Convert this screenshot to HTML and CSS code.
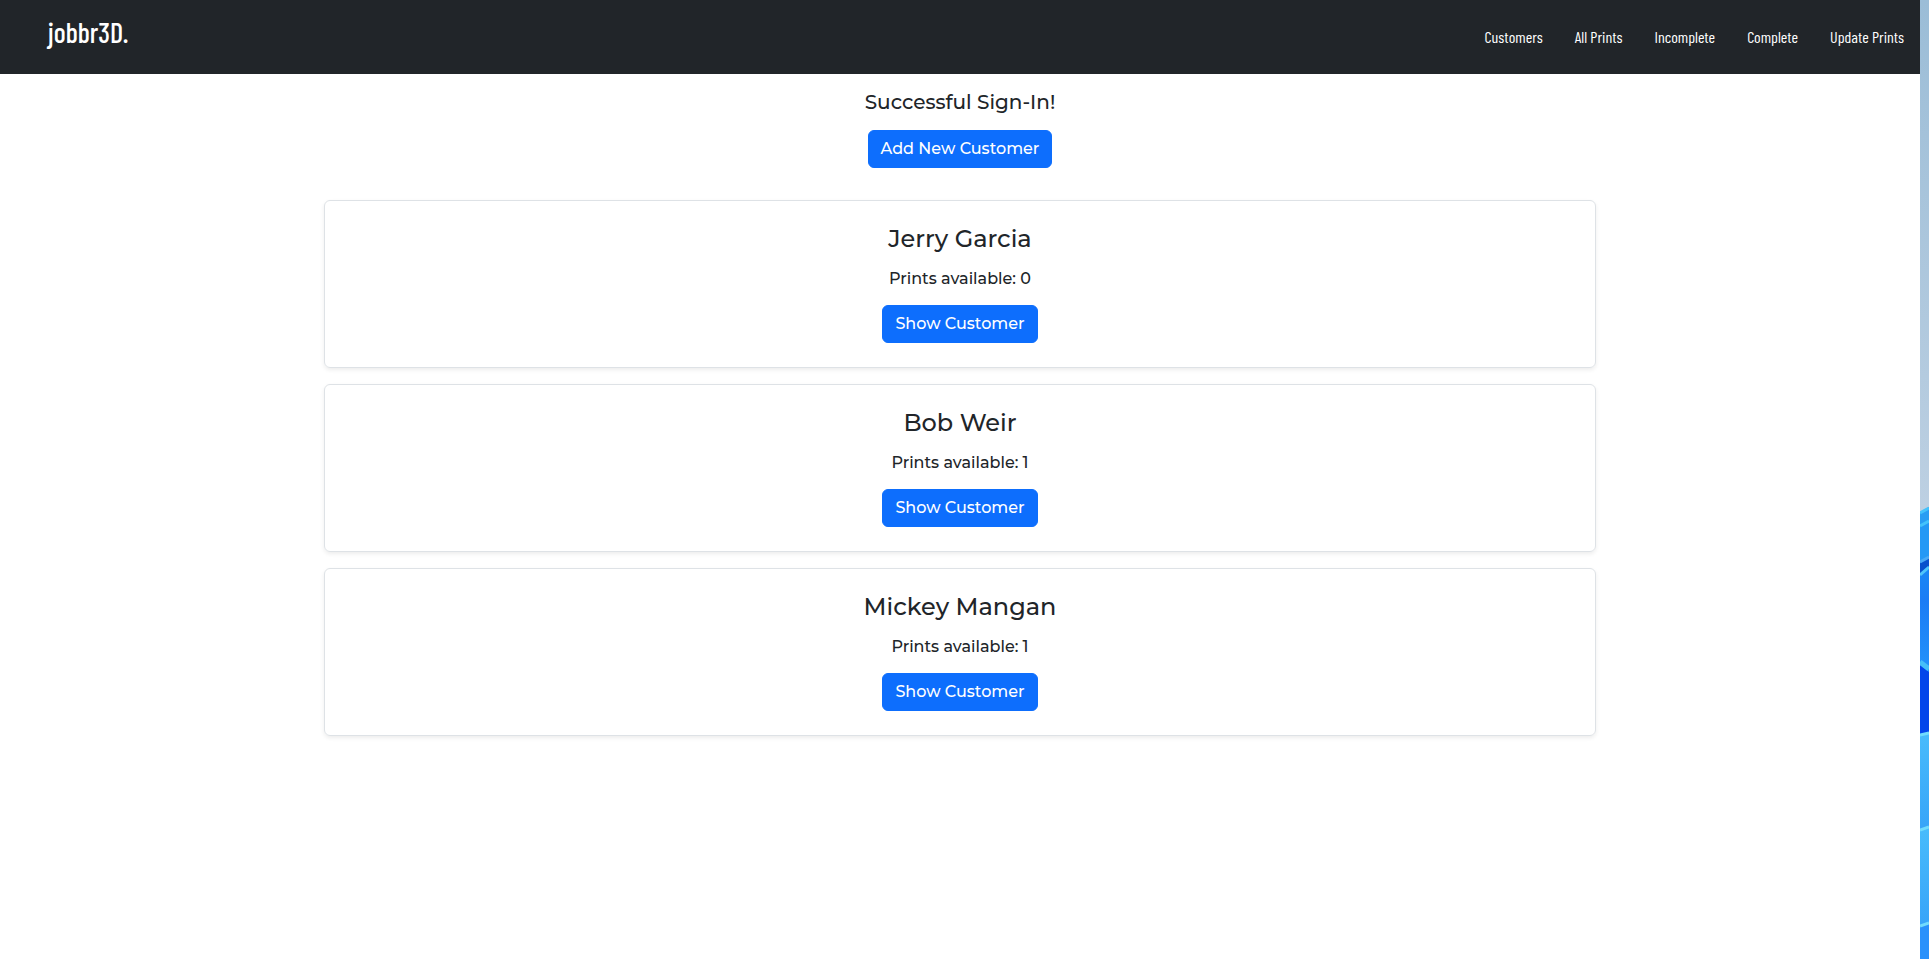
FILE: index.html
```html
<!DOCTYPE html>
<html lang="en">
<head>
<meta charset="utf-8">
<meta name="viewport" content="width=device-width, initial-scale=1">
<title>jobbr3D.</title>
<link rel="stylesheet" href="styles.css">
</head>
<body>
<div class="page">
  <header class="navbar">
    <a class="brand" href="#">jobbr3D.</a>
    <nav class="links">
      <a href="#">Customers</a>
      <a href="#">All Prints</a>
      <a href="#">Incomplete</a>
      <a href="#">Complete</a>
      <a href="#">Update Prints</a>
    </nav>
  </header>
  <main class="container">
    <p class="notice">Successful Sign-In!</p>
    <button class="btn" type="button">Add New Customer</button>
    <section class="cards">
      <article class="card">
        <h2>Jerry Garcia</h2>
        <p>Prints available: 0</p>
        <button class="btn" type="button">Show Customer</button>
      </article>
      <article class="card">
        <h2>Bob Weir</h2>
        <p>Prints available: 1</p>
        <button class="btn" type="button">Show Customer</button>
      </article>
      <article class="card">
        <h2>Mickey Mangan</h2>
        <p>Prints available: 1</p>
        <button class="btn" type="button">Show Customer</button>
      </article>
    </section>
  </main>
</div>
<svg class="wallpaper" viewBox="0 0 9 959" preserveAspectRatio="none" aria-hidden="true">
  <defs>
    <linearGradient id="sky" gradientUnits="userSpaceOnUse" x1="0" y1="0" x2="0" y2="512"><stop offset="0" stop-color="#9bbdd7"/><stop offset="1" stop-color="#bdd0e2"/></linearGradient>
    <linearGradient id="petal" x1="0" y1="0" x2="0" y2="1"><stop offset="0" stop-color="#1989f5"/><stop offset=".3" stop-color="#1b7cf5"/><stop offset="1" stop-color="#2395fb"/></linearGradient>
    <linearGradient id="wave" x1="0" y1="0" x2="0" y2="1"><stop offset="0" stop-color="#48bcfc"/><stop offset="1" stop-color="#37a4f8"/></linearGradient>
  </defs>
  <rect width="9" height="959" fill="url(#sky)"/>
  <path d="M0 512L9 507V959H0z" fill="#289df3"/>
  <path d="M0 525L9 520V557L0 563z" fill="#2499f5"/>
  <path d="M0 513L9 508M0 526L9 521" stroke="#43c2fb" stroke-width="3"/>
  <path d="M0 563L9 557V569L0 576z" fill="#0751cc"/>
  <path d="M0 562L9 557" stroke="#49a9f5" stroke-width="3"/>
  <path d="M0 574L9 566V680L0 665z" fill="url(#petal)"/>
  <path d="M0 575L9 567" stroke="#4fc5fa" stroke-width="3"/>
  <path d="M0 665L9 672V732L0 735z" fill="#0345ea"/>
  <path d="M0 662L9 669" stroke="#45bff8" stroke-width="5"/>
  <path d="M0 735L9 732V827L0 830z" fill="url(#wave)"/>
  <path d="M0 830L9 827V923L0 926z" fill="url(#wave)"/>
  <path d="M0 926L9 923V959H0z" fill="#2991fb"/>
  <path d="M0 735L9 733M0 830L9 827M0 926L9 923" stroke="#70dbfd" stroke-width="3"/>
</svg>
</body>
</html>
```
FILE: styles.css
```css
* {
  box-sizing: border-box;
}

body {
  margin: 0;
  display: flex;
  min-height: 100vh;
  background: #fff;
  color: #212529;
  font-family: Montserrat, "Open Sans", sans-serif;
  font-size: 16px;
  font-weight: 500;
  line-height: 24px;
}

.page {
  flex: 1;
}

.wallpaper {
  width: 9px;
  height: 100vh;
}

.navbar {
  display: flex;
  align-items: center;
  justify-content: space-between;
  padding: 12px 16px 12px 48px;
  min-height: 74px;
  background: #212529;
  font-family: "Barlow Condensed", "Roboto Condensed", "Liberation Sans Narrow", sans-serif;
}

.navbar a {
  color: #fff;
  text-decoration: none;
}

.brand {
  padding-bottom: 10px;
  font-size: 28px;
  line-height: 40px;
}

.links {
  display: flex;
  gap: 32px;
  font-size: 16px;
  font-weight: 400;
}

.container {
  max-width: 1320px;
  margin: 0 auto;
  padding: 16px 24px;
  text-align: center;
}

.notice {
  margin: 0 0 16px;
  font-size: 20px;
}

.btn {
  padding: 6px 12px;
  border: 1px solid #0d6efd;
  border-radius: 6px;
  background: #0d6efd;
  color: #fff;
  font: inherit;
  cursor: pointer;
}

.cards {
  display: grid;
  gap: 16px;
  margin-top: 32px;
}

.card {
  padding: 24px;
  border: 1px solid #dee2e6;
  border-radius: 6px;
  box-shadow: 0 2px 4px rgba(0, 0, 0, 0.075);
}

.card h2 {
  margin: 0 0 14px;
  font-size: 24px;
  font-weight: 500;
  line-height: 28px;
}

.card p {
  margin: 0 0 14px;
}
```
